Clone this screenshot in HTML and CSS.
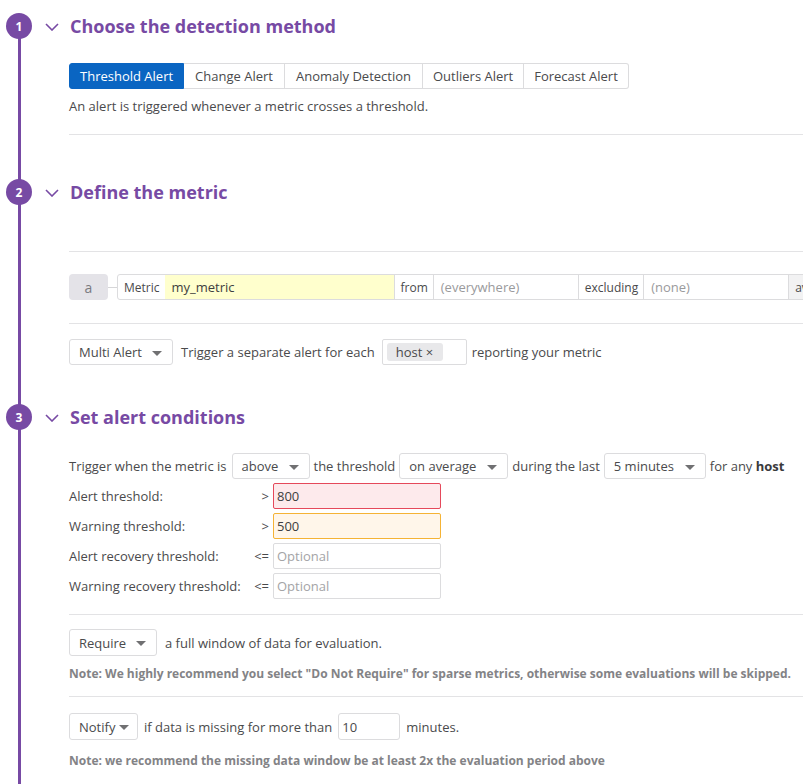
FILE: index.html
```html
<!DOCTYPE html>
<html>
<head>
<meta charset="utf-8">
<link rel="stylesheet" href="styles.css">
</head>
<body>
<div class="wizard">
  <div class="rail"></div>

  <section class="step step1">
    <div class="step-head">
      <span class="num">1</span>
      <svg class="chev" width="14" height="8" viewBox="0 0 14 8"><path d="M1 1 L7 7 L13 1" fill="none" stroke="#774aa4" stroke-width="1.6"/></svg>
      <h2>Choose the detection method</h2>
    </div>
    <div class="body">
      <div class="tabs">
        <span class="tab active">Threshold Alert</span>
        <span class="tab wide">Change Alert</span>
        <span class="tab wide">Anomaly Detection</span>
        <span class="tab">Outliers Alert</span>
        <span class="tab">Forecast Alert</span>
      </div>
      <p class="desc">An alert is triggered whenever a metric crosses a threshold.</p>
      <div class="divider d1"></div>
    </div>
  </section>

  <section class="step step2">
    <div class="step-head">
      <span class="num">2</span>
      <svg class="chev" width="14" height="8" viewBox="0 0 14 8"><path d="M1 1 L7 7 L13 1" fill="none" stroke="#774aa4" stroke-width="1.6"/></svg>
      <h2>Define the metric</h2>
    </div>
    <div class="body">
      <div class="divider d2"></div>
      <div class="metric-row">
        <span class="qname">a</span>
        <span class="connector"></span>
        <div class="query">
          <span class="qlabel">Metric</span>
          <span class="qmetric">my_metric</span>
          <span class="qlabel bl">from</span>
          <span class="qph w-from">(everywhere)</span>
          <span class="qlabel bl">excluding</span>
          <span class="qph w-excl">(none)</span>
          <span class="qlabel bl qgray">avg by</span>
        </div>
      </div>
      <div class="divider d3"></div>
      <div class="row multi-row">
        <span class="select w-multi">Multi Alert<i class="caret"></i></span>
        <span class="txt">Trigger a separate alert for each</span>
        <span class="taginput"><span class="tag">host ×</span></span>
        <span class="txt">reporting your metric</span>
      </div>
    </div>
  </section>

  <section class="step step3">
    <div class="step-head">
      <span class="num">3</span>
      <svg class="chev" width="14" height="8" viewBox="0 0 14 8"><path d="M1 1 L7 7 L13 1" fill="none" stroke="#774aa4" stroke-width="1.6"/></svg>
      <h2>Set alert conditions</h2>
    </div>
    <div class="body">
      <div class="row trigger-row">
        <span class="txt">Trigger when the metric is</span>
        <span class="select w-above">above<i class="caret"></i></span>
        <span class="txt">the threshold</span>
        <span class="select w-avg">on average<i class="caret"></i></span>
        <span class="txt">during the last</span>
        <span class="select w-min">5 minutes<i class="caret"></i></span>
        <span class="txt">for any <b>host</b></span>
      </div>
      <div class="thresholds">
        <div class="th-row"><span class="th-label">Alert threshold:</span><span class="th-op">&gt;</span><span class="th-input alert">800</span></div>
        <div class="th-row"><span class="th-label">Warning threshold:</span><span class="th-op">&gt;</span><span class="th-input warn">500</span></div>
        <div class="th-row"><span class="th-label">Alert recovery threshold:</span><span class="th-op">&lt;=</span><span class="th-input ph">Optional</span></div>
        <div class="th-row"><span class="th-label">Warning recovery threshold:</span><span class="th-op">&lt;=</span><span class="th-input ph">Optional</span></div>
      </div>
      <div class="divider d4"></div>
      <div class="row require-row">
        <span class="select w-req">Require<i class="caret"></i></span>
        <span class="txt">a full window of data for evaluation.</span>
      </div>
      <p class="note n1">Note: We highly recommend you select "Do Not Require" for sparse metrics, otherwise some evaluations will be skipped.</p>
      <div class="divider d5"></div>
      <div class="row notify-row">
        <span class="select w-notify">Notify<i class="caret"></i></span>
        <span class="txt">if data is missing for more than</span>
        <span class="input w-ten">10</span>
        <span class="txt">minutes.</span>
      </div>
      <p class="note n2">Note: we recommend the missing data window be at least 2x the evaluation period above</p>
    </div>
  </section>
</div>
</body>
</html>
```

FILE: styles.css
```css
html, body {
  margin: 0;
  padding: 0;
  overflow: hidden;
  background: #ffffff;
}
body {
  font-family: "Open Sans", "Noto Sans", sans-serif;
  font-size: 13px;
  color: #4a4a4c;
  width: 803px;
  height: 784px;
}
.wizard {
  position: relative;
  width: 1000px;
  height: 784px;
}
.rail {
  position: absolute;
  left: 18px;
  top: 26px;
  bottom: 0;
  width: 3px;
  background: #774aa4;
}
.step-head {
  display: flex;
  align-items: center;
  height: 26px;
  position: relative;
}
.num {
  width: 26px;
  height: 26px;
  margin-left: 6px;
  border-radius: 50%;
  background: #774aa4;
  color: #fff;
  font-weight: 700;
  font-size: 12px;
  display: flex;
  align-items: center;
  justify-content: center;
}
.chev {
  margin-left: 13px;
  margin-top: 1px;
}
h2 {
  margin: 0 0 0 11px;
  font-size: 18px;
  font-weight: 700;
  color: #774aa4;
  line-height: 26px;
}
.body {
  margin-left: 69px;
}
.step1 { padding-top: 13px; }
.step1 .body { padding-top: 24px; }
.tabs {
  display: flex;
  height: 26px;
}
.tab {
  display: flex;
  align-items: center;
  padding: 0 10px;
  border: 1px solid #dcdcde;
  border-left: none;
  color: #4a4a4c;
  box-sizing: border-box;
  height: 26px;
}
.tab.wide { padding: 0 11px; }
.tab:first-child {
  border-left: 1px solid #0a65c2;
  border-radius: 3px 0 0 3px;
}
.tab:last-child { border-radius: 0 3px 3px 0; }
.tab.active {
  background: #0a65c2;
  border-color: #0a65c2;
  color: #fff;
}
.desc {
  margin: 8px 0 0 0;
  line-height: 18px;
}
.divider {
  height: 1px;
  background: #e3e3e5;
}
.d1 { margin-top: 19px; }
.step2 { margin-top: 44px; }
.step2 .body { padding-top: 46px; }
.metric-row {
  display: flex;
  align-items: center;
  margin-top: 22px;
  height: 26px;
}
.qname {
  width: 39px;
  height: 26px;
  border-radius: 4px;
  background: #e4e3e8;
  color: #7b7b80;
  font-size: 14px;
  display: flex;
  align-items: center;
  justify-content: center;
}
.connector {
  width: 9px;
  height: 1px;
  background: #d6d6d8;
}
.query {
  display: flex;
  height: 26px;
  border: 1px solid #dcdcde;
  border-radius: 3px;
  box-sizing: border-box;
  overflow: hidden;
}
.query > span {
  display: flex;
  align-items: center;
  height: 24px;
}
.qlabel {
  padding: 0 5px 0 6px;
  font-size: 12px;
  color: #4a4a4c;
}
.bl { border-left: 1px solid #dcdcde; }
.qmetric {
  width: 229px;
  background: #ffffcd;
  padding-left: 7px;
  box-sizing: border-box;
  color: #3e3e40;
}
.qph {
  color: #9a9a9c;
  padding-left: 7px;
  box-sizing: border-box;
  border-left: 1px solid #dcdcde;
}
.w-from { width: 145px; }
.w-excl { width: 145px; }
.qgray { background: #f2f2f3; }
.d3 { margin-top: 23px; }
.row {
  display: flex;
  align-items: center;
  gap: 8px;
}
.multi-row { margin-top: 15px; height: 26px; }
.select, .input {
  position: relative;
  height: 26px;
  box-sizing: border-box;
  border: 1px solid #dcdcde;
  border-radius: 3px;
  padding-left: 9px;
  display: flex;
  align-items: center;
  background: #fff;
  color: #4a4a4c;
}
.caret {
  position: absolute;
  right: 10px;
  top: 11px;
  width: 0;
  height: 0;
  border-left: 5px solid transparent;
  border-right: 5px solid transparent;
  border-top: 5px solid #707072;
}
.w-multi { width: 104px; }
.taginput {
  width: 85px;
  height: 26px;
  box-sizing: border-box;
  border: 1px solid #dcdcde;
  border-radius: 2px;
  display: flex;
  align-items: center;
  padding-left: 4px;
  margin-left: -1px;
  margin-right: -3px;
}
.tag {
  background: #e8e8ea;
  border-radius: 3px;
  padding: 0 10px 0 9px;
  height: 18px;
  line-height: 18px;
  color: #4a4a4c;
}
.step3 { margin-top: 39px; }
.step3 .body { padding-top: 23px; }
.trigger-row { height: 26px; gap: 4px; }
.trigger-row .w-above { margin-left: 1px; }
.w-above { width: 78px; }
.w-avg { width: 109px; }
.w-min { width: 102px; }
.trigger-row b { font-weight: 700; color: #3a3a3c; }
.thresholds {
  margin-top: 4px;
  display: flex;
  flex-direction: column;
  gap: 4px;
}
.th-row {
  display: flex;
  align-items: center;
  height: 26px;
}
.th-label { width: 180px; }
.th-op {
  width: 20px;
  text-align: right;
  padding-right: 4px;
}
.th-input {
  width: 168px;
  height: 26px;
  box-sizing: border-box;
  border: 1px solid #dcdcde;
  border-radius: 2px;
  padding-left: 3px;
  display: flex;
  align-items: center;
  color: #3e3e40;
}
.th-input.alert { background: #fdeaec; border-color: #e5495b; }
.th-input.warn { background: #fff6ea; border-color: #f5b335; }
.th-input.ph { color: #a4a4a6; }
.d4 { margin-top: 15px; }
.require-row { margin-top: 14px; height: 27px; }
.require-row .select { height: 27px; }
.w-req { width: 88px; }
.note {
  margin: 10px 0 0 0;
  font-size: 12px;
  font-weight: 700;
  color: #838386;
  line-height: 16px;
}
.d5 { margin-top: 14px; }
.notify-row { margin-top: 16px; height: 27px; gap: 6px; }
.notify-row .select, .notify-row .input { height: 27px; }
.w-notify { width: 69px; }
.w-notify .caret { right: 8px; }
.w-ten { width: 62px; padding-left: 3px; }
.n2 { margin-top: 13px; }
```
